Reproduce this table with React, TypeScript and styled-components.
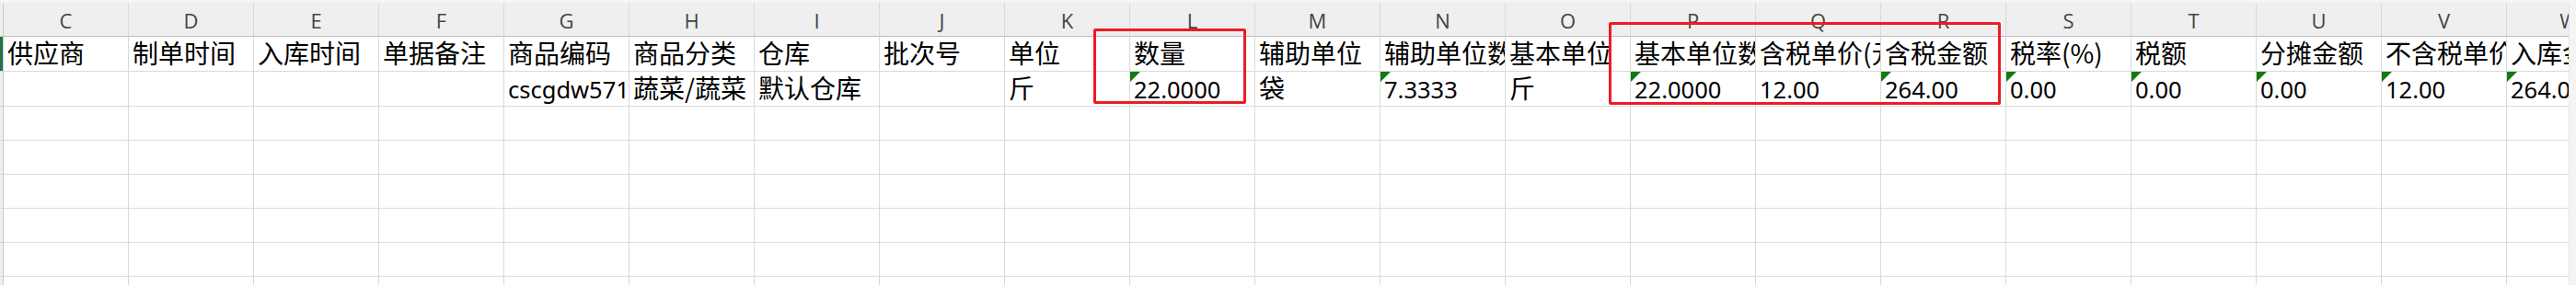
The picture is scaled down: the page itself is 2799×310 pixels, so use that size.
import React from "react";
import styled, { createGlobalStyle } from "styled-components";

const GlobalStyle = createGlobalStyle`
	html, body {
		margin: 0;
		padding: 0;
		background: #ffffff;
	}
`;

const COL_W = 136;
const ROW_HEIGHTS = [38, 38, 37, 37, 37, 37, 37, 37];

const letters = "CDEFGHIJKLMNOPQRSTUVW".split("");

const headers = [
	"供应商", "制单时间", "入库时间", "单据备注", "商品编码", "商品分类", "仓库",
	"批次号", "单位", "数量", "辅助单位", "辅助单位数量", "基本单位", "基本单位数量",
	"含税单价(元)", "含税金额", "税率(%)", "税额", "分摊金额", "不含税单价", "入库金额",
];

interface Value {
	text: string;
	latin?: boolean;
	flagged?: boolean;
}

const values: Value[] = [
	{ text: "" }, { text: "" }, { text: "" }, { text: "" },
	{ text: "cscgdw571", latin: true }, { text: "蔬菜/蔬菜" }, { text: "默认仓库" }, { text: "" },
	{ text: "斤" }, { text: "22.0000", latin: true, flagged: true }, { text: "袋" },
	{ text: "7.3333", latin: true, flagged: true }, { text: "斤" },
	{ text: "22.0000", latin: true, flagged: true },
	{ text: "12.00", latin: true }, { text: "264.00", latin: true, flagged: true },
	{ text: "0.00", latin: true, flagged: true }, { text: "0.00", latin: true, flagged: true },
	{ text: "0.00", latin: true, flagged: true }, { text: "12.00", latin: true, flagged: true },
	{ text: "264.00", latin: true, flagged: true },
];

const Page = styled.div`
	position: relative;
	width: 2799px;
	height: 310px;
	overflow: hidden;
	display: flex;
	flex-direction: column;
	background: #ffffff;
`;

const TopStrip = styled.div`
	height: 3px;
	flex: none;
	background: #f5f5f5;
`;

const Body = styled.div`
	flex: 1;
	display: flex;
	min-height: 0;
`;

const Gutter = styled.div`
	width: 4px;
	flex: none;
	display: flex;
	flex-direction: column;
	border-right: 1px solid #c8c8c8;
	box-sizing: border-box;
`;

const GutterCell = styled.div<{ $h: number; $active?: boolean }>`
	height: ${(p) => p.$h}px;
	flex: none;
	box-sizing: border-box;
	border-bottom: 1px solid #d4d4d4;
	background: ${(p) => (p.$active ? "#217346" : "#efefef")};
`;

const Grid = styled.div`
	flex: 1;
	min-width: 0;
	overflow: hidden;
	display: flex;
	flex-direction: column;
`;

const Row = styled.div<{ $h: number }>`
	display: flex;
	flex: none;
	height: ${(p) => p.$h}px;
`;

const LetterCell = styled.div`
	width: ${COL_W}px;
	flex: none;
	box-sizing: border-box;
	display: flex;
	align-items: center;
	justify-content: center;
	background: #efefef;
	border-right: 1px solid #dadada;
	border-bottom: 1px solid #bdbdbd;
	color: #444444;
	font-family: "Open Sans", "Noto Sans", sans-serif;
	font-size: 22px;
	padding-top: 2px;
`;

const Cell = styled.div<{ $latin?: boolean }>`
	position: relative;
	width: ${COL_W}px;
	flex: none;
	box-sizing: border-box;
	display: flex;
	align-items: flex-end;
	padding: 0 0 ${(p) => (p.$latin ? 5 : 6)}px 4px;
	border-right: 1px solid #d9d9d9;
	border-bottom: 1px solid #d9d9d9;
	overflow: hidden;
	white-space: nowrap;
	color: #000000;
	font-family: ${(p) =>
		p.$latin
			? `"Noto Sans", "Noto Sans CJK SC", sans-serif`
			: `"Noto Sans CJK SC", "Noto Sans", sans-serif`};
	font-size: ${(p) => (p.$latin ? 25.5 : 28)}px;
	line-height: 1;
`;

const Flag = styled.span`
	position: absolute;
	top: 0;
	left: 0;
	width: 0;
	height: 0;
	border-top: 11px solid #127a12;
	border-right: 11px solid transparent;
`;

const Scrollbar = styled.div`
	width: 8px;
	flex: none;
	background: #f4f4f4;
	border-left: 1px solid #e4e4e4;
	box-sizing: border-box;
`;

const Highlight = styled.div<{ $x: number; $y: number; $w: number; $h: number }>`
	position: absolute;
	left: ${(p) => p.$x}px;
	top: ${(p) => p.$y}px;
	width: ${(p) => p.$w}px;
	height: ${(p) => p.$h}px;
	box-sizing: border-box;
	border: 3px solid #ec1c24;
	border-radius: 2px;
	pointer-events: none;
`;

const App = () => {
	const blankRows = ROW_HEIGHTS.slice(2);
	return (
		<>
			<GlobalStyle />
			<Page>
				<TopStrip />
				<Body>
					<Gutter>
						<GutterCell $h={37} />
						{ROW_HEIGHTS.map((h, i) => (
							<GutterCell key={i} $h={h} $active={i === 0} />
						))}
					</Gutter>
					<Grid>
						<Row $h={37}>
							{letters.map((l) => (
								<LetterCell key={l}>{l}</LetterCell>
							))}
						</Row>
						<Row $h={ROW_HEIGHTS[0]}>
							{headers.map((h) => (
								<Cell key={h}>{h}</Cell>
							))}
						</Row>
						<Row $h={ROW_HEIGHTS[1]}>
							{values.map((v, i) => (
								<Cell key={i} $latin={v.latin}>
									{v.flagged && <Flag />}
									{v.text}
								</Cell>
							))}
						</Row>
						{blankRows.map((h, r) => (
							<Row key={r} $h={h}>
								{letters.map((l) => (
									<Cell key={l} />
								))}
							</Row>
						))}
					</Grid>
					<Scrollbar />
				</Body>
				<Highlight $x={1188} $y={31} $w={166} $h={82} />
				<Highlight $x={1748} $y={24} $w={426} $h={90} />
			</Page>
		</>
	);
};

export default App;
